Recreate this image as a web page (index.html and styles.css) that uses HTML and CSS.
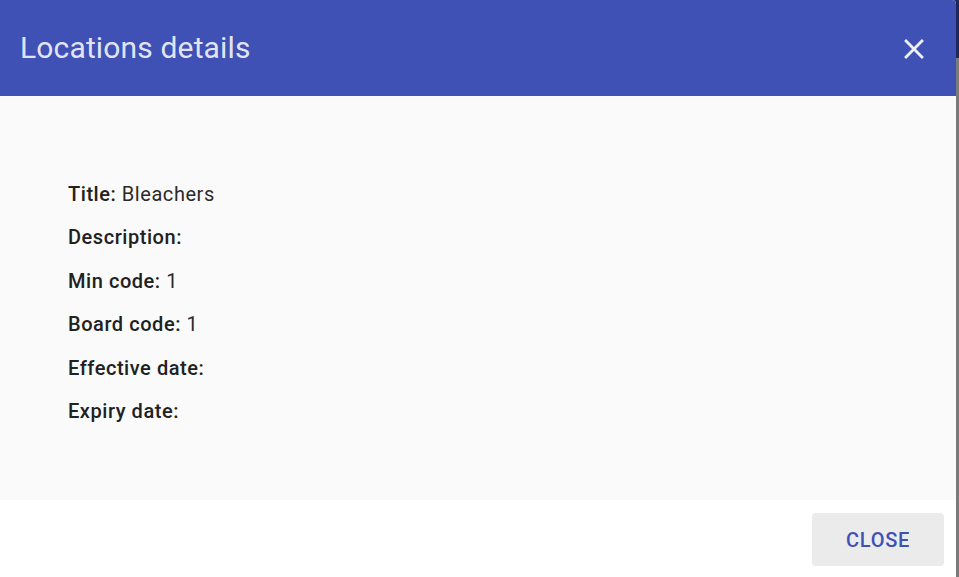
FILE: index.html
```html
<!DOCTYPE html>
<html lang="en">
<head>
<meta charset="utf-8">
<title>Locations details</title>
<link rel="stylesheet" href="styles.css">
</head>
<body>
<div class="page">
  <div class="appbar"></div>
  <div class="page-body"></div>
  <div class="backdrop"></div>
</div>
<div class="dialog" role="dialog" aria-labelledby="dlg-title">
  <header class="dialog-header">
    <h2 id="dlg-title" class="dialog-title">Locations details</h2>
    <button class="icon-btn" aria-label="Close">
      <svg viewBox="0 0 24 24" width="34" height="34" aria-hidden="true"><path fill="currentColor" d="M19 6.41L17.59 5 12 10.59 6.41 5 5 6.41 10.59 12 5 17.59 6.41 19 12 13.41 17.59 19 19 17.59 13.41 12z"/></svg>
    </button>
  </header>
  <section class="dialog-content">
    <p class="field"><span class="label">Title:</span> <span class="value">Bleachers</span></p>
    <p class="field"><span class="label">Description:</span></p>
    <p class="field"><span class="label">Min code:</span> <span class="value">1</span></p>
    <p class="field"><span class="label">Board code:</span> <span class="value">1</span></p>
    <p class="field"><span class="label">Effective date:</span></p>
    <p class="field"><span class="label">Expiry date:</span></p>
  </section>
  <footer class="dialog-actions">
    <button class="btn-close">CLOSE</button>
  </footer>
</div>
</body>
</html>
```

FILE: styles.css
```css
* { box-sizing: border-box; }
html, body { margin: 0; padding: 0; }
body {
  width: 959px;
  height: 577px;
  overflow: hidden;
  position: relative;
  font-family: Roboto, "Noto Sans", sans-serif;
  background: #ffffff;
}
.page {
  display: flex;
  flex-direction: column;
  height: 577px;
}
.appbar {
  height: 58px;
  background: #3f51b5;
}
.page-body {
  flex: 1;
  background: #f4f4f4;
}
.backdrop {
  position: absolute;
  inset: 0;
  background: rgba(0, 0, 0, 0.5);
}
.dialog {
  position: absolute;
  left: 0;
  top: 0;
  width: 956px;
  height: 580px;
  border-radius: 0 4px 4px 0;
  overflow: hidden;
  display: flex;
  flex-direction: column;
  background: #ffffff;
}
.dialog-header {
  height: 96px;
  background: #3f51b5;
  color: rgba(255, 255, 255, 0.87);
  display: flex;
  align-items: center;
  justify-content: space-between;
  padding: 0 25px 0 20px;
}
.dialog-title {
  margin: 0;
  font-size: 30px;
  font-weight: 400;
  line-height: 36px;
  letter-spacing: 0.15px;
  padding-bottom: 1px;
}
.icon-btn {
  border: 0;
  background: transparent;
  color: rgba(255, 255, 255, 0.9);
  padding: 0;
  width: 34px;
  height: 34px;
  display: flex;
  align-items: center;
  justify-content: center;
  margin-top: 1px;
}
.dialog-content {
  height: 404px;
  background: #fafafa;
  padding: 86px 68px 0;
  display: flex;
  flex-direction: column;
  gap: 19.4px;
}
.field {
  margin: 0;
  font-size: 20px;
  line-height: 24px;
  letter-spacing: 0.55px;
  color: #212121;
}
.label { font-weight: 500; }
.value { font-weight: 400; color: #2a2a2a; }
.dialog-actions {
  flex: 1;
  display: flex;
  justify-content: flex-end;
  align-items: flex-start;
  padding: 13px 12px 0;
}
.btn-close {
  width: 132px;
  height: 53px;
  border: 0;
  border-radius: 4px;
  background: #ebebeb;
  color: #3f51b5;
  font-family: Roboto, "Noto Sans", sans-serif;
  font-size: 20px;
  font-weight: 500;
  letter-spacing: 0.7px;
}
```
